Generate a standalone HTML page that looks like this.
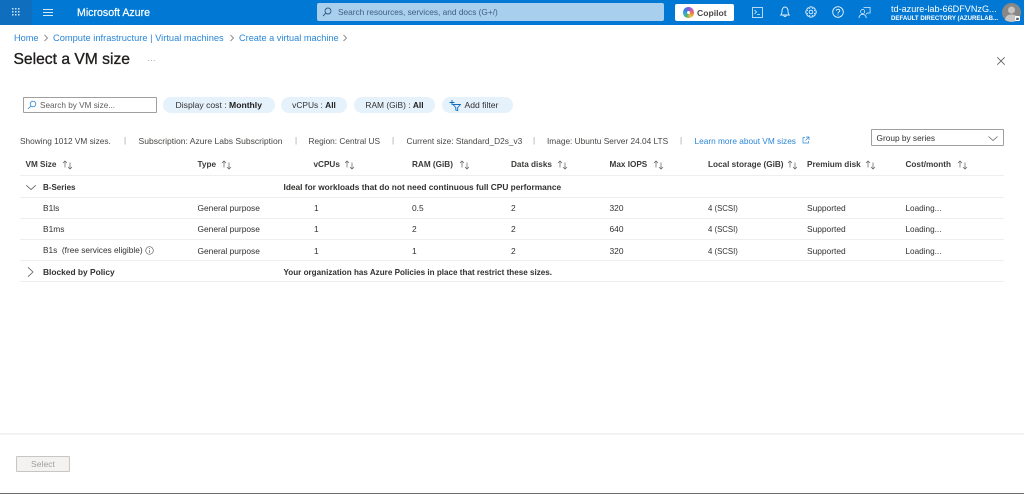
<!DOCTYPE html>
<html><head><meta charset="utf-8"><title>Select a VM size</title>
<style>
html,body{margin:0;padding:0;background:#fff;}
body{width:1024px;height:494px;position:relative;overflow:hidden;font-family:"Liberation Sans",sans-serif;font-size:8.4px;color:#323130;}
#w{position:absolute;left:0;top:0;width:1024px;height:494px;overflow:hidden;filter:blur(.3px);}
.t{position:absolute;white-space:nowrap;line-height:12px;height:12px;}
.h{font-weight:700;color:#3b3a39;font-size:8.2px;top:159px;}
.b{font-weight:700;color:#323130;font-size:8.4px;}
.l{position:absolute;left:20px;width:984px;height:1px;background:#efeeed;}
.p{position:absolute;top:97px;height:16px;border-radius:8px;background:#e5f1fb;line-height:16px;text-align:center;white-space:nowrap;font-size:8.4px;color:#323130;}
.p b{color:#201f1e;}
.sep{position:absolute;top:135px;color:#a19f9d;line-height:12px;font-size:8px;}
.m{color:#484644;top:135px;font-size:8.3px;}
.sc{font-size:7.8px;}
a{color:#2a86d6;text-decoration:none;}
svg{position:absolute;}
.a{top:159.500px;}
</style></head><body><div id="w">
<div style="position:absolute;left:0;top:0;width:1024px;height:25px;background:#0078d4;"></div>
<div style="position:absolute;left:0;top:0;width:32px;height:25px;background:#106ebe;"></div>
<svg style="left:11px;top:7px" width="10" height="10" viewBox="0 0 10 10" fill="#cfe4f7"><rect x="1" y="1" width="1.5" height="1.5"/><rect x="4" y="1" width="1.5" height="1.5"/><rect x="7" y="1" width="1.5" height="1.5"/><rect x="1" y="4" width="1.5" height="1.5"/><rect x="4" y="4" width="1.5" height="1.5"/><rect x="7" y="4" width="1.5" height="1.5"/><rect x="1" y="7" width="1.5" height="1.5"/><rect x="4" y="7" width="1.5" height="1.5"/><rect x="7" y="7" width="1.5" height="1.5"/></svg>
<svg style="left:43px;top:8px" width="10" height="9" viewBox="0 0 10 9" stroke="#d5e8f8" stroke-width="1"><path d="M0 1.500H10M0 4.500H10M0 7.500H10"/></svg>
<div class="t" style="left:77px;top:7px;color:#fff;font-size:10.6px;-webkit-text-stroke:.2px #fff;">Microsoft Azure</div>
<div style="position:absolute;left:317px;top:3px;width:347px;height:18px;background:#a9cfee;border-radius:2px;"></div>
<svg style="left:322px;top:7px" width="10" height="10" viewBox="0 0 10 10" fill="none" stroke="#31587d" stroke-width=".9"><circle cx="6" cy="4" r="3"/><path d="M3.800 6.200L1 9"/></svg>
<div class="t" style="left:338px;top:6px;color:#3f5f7c;font-size:8.3px;">Search resources, services, and docs (G+/)</div>
<div style="position:absolute;left:675px;top:4px;width:59px;height:17px;background:#fff;border-radius:2px;"></div>
<div style="position:absolute;left:683px;top:7px;width:10.500px;height:10.500px;border-radius:50%;background:conic-gradient(#7c5ce0,#d05fb0,#ef7f3c,#f0c04a,#58b368,#2fa9d8,#3b7fdc,#7c5ce0);"></div>
<div style="position:absolute;left:686.700px;top:10.700px;width:3px;height:3px;border-radius:50%;background:#fff;"></div>
<div class="t" style="left:697px;top:7px;font-size:8.600px;color:#4a4947;font-weight:700;">Copilot</div>
<svg style="left:752px;top:6.500px" width="11" height="11" viewBox="0 0 11 11" fill="none" stroke="#e5f1fb" stroke-width=".8"><rect x=".5" y=".5" width="10" height="10"/><path d="M2.500 3L4.500 5L2.500 7M5 7.500H8"/></svg>
<svg style="left:779px;top:6px" width="12" height="12" viewBox="0 0 12 12" fill="none" stroke="#e5f1fb" stroke-width=".9"><path d="M1.800 9C2.800 8 3 7.200 3 5C3 2.800 4.200 1 6 1C7.800 1 9 2.800 9 5C9 7.200 9.200 8 10.200 9ZM4.800 9.500C5 11 7 11 7.200 9.500"/></svg>
<svg style="left:805px;top:6px" width="12" height="12" viewBox="0 0 12 12" fill="none" stroke="#e5f1fb" stroke-width=".9"><circle cx="6" cy="6" r="1.800"/><path d="M5 .8H7L7.400 2.400L8.800 1.700L10.300 3.200L9.600 4.600L11.200 5V7L9.600 7.400L10.300 8.800L8.800 10.300L7.400 9.600L7 11.200H5L4.600 9.600L3.200 10.300L1.700 8.800L2.400 7.400L.8 7V5L2.400 4.600L1.700 3.200L3.200 1.700L4.600 2.400Z"/></svg>
<svg style="left:832px;top:6px" width="12" height="12" viewBox="0 0 12 12" fill="none" stroke="#e5f1fb" stroke-width=".9"><circle cx="6" cy="6" r="5.300"/><path d="M4.300 4.700C4.300 2.800 7.800 2.800 7.800 4.700C7.800 6 6 5.800 6 7.500"/><path d="M6 8.500V9.500"/></svg>
<svg style="left:858px;top:5.500px" width="13" height="13" viewBox="0 0 14 14" fill="none" stroke="#e5f1fb" stroke-width=".8"><circle cx="5" cy="6" r="2.200"/><path d="M1 13C1.300 10 3 9 5 9C7 9 8.500 10 9 13"/><path d="M6 1.500H13V7.500H10L8.500 9"/></svg>
<div class="t" style="left:891px;top:3px;color:#fff;font-size:9.100px;">td-azure-lab-66DFVNzG...</div>
<div class="t" style="left:891px;top:13px;color:#fff;font-size:6.100px;font-weight:700;">DEFAULT DIRECTORY (AZURELAB...</div>
<svg style="left:1002px;top:3px" width="19" height="19" viewBox="0 0 19 19"><circle cx="9.500" cy="9.500" r="9.500" fill="#8a8886"/><circle cx="9.500" cy="7" r="3.500" fill="#c8c6c4"/><path d="M3 17C3.500 12.500 6.500 11.500 9.500 11.500C12.500 11.500 15.500 12.500 16 17C12 19.500 7 19.500 3 17Z" fill="#c8c6c4"/><rect x="13" y="13" width="5" height="5" rx="1" fill="#fff"/><rect x="14.200" y="14.800" width="2.600" height="2.200" fill="#605e5c"/></svg>

<div class="t" style="left:14px;top:32px;font-size:9.200px;"><a>Home</a></div>
<svg style="left:43px;top:34px" width="6" height="8" viewBox="0 0 6 8" fill="none" stroke="#605e5c" stroke-width=".7"><path d="M1.500 1L4.500 4L1.500 7"/></svg>
<div class="t" style="left:53px;top:32px;font-size:9.300px;"><a>Compute infrastructure | Virtual machines</a></div>
<svg style="left:229px;top:34px" width="6" height="8" viewBox="0 0 6 8" fill="none" stroke="#605e5c" stroke-width=".7"><path d="M1.500 1L4.500 4L1.500 7"/></svg>
<div class="t" style="left:239px;top:32px;font-size:9.200px;"><a>Create a virtual machine</a></div>
<svg style="left:342px;top:34px" width="6" height="8" viewBox="0 0 6 8" fill="none" stroke="#605e5c" stroke-width=".7"><path d="M1.500 1L4.500 4L1.500 7"/></svg>
<div class="t" style="left:13.500px;top:50px;height:20px;line-height:20px;font-size:15.650px;color:#201f1e;-webkit-text-stroke:.35px #201f1e;">Select a VM size</div>
<div class="t" style="left:147.500px;top:55px;color:#8a8886;font-size:8px;">···</div>
<svg style="left:997px;top:56.500px" width="8" height="8" viewBox="0 0 8 8" stroke="#605e5c" stroke-width=".8"><path d="M.3 .3L7.700 7.700M7.700 .3L.3 7.700"/></svg>

<div style="position:absolute;left:23px;top:97px;width:132px;height:14px;border:1px solid #a19f9d;border-radius:1px;"></div>
<svg style="left:27px;top:100px" width="10" height="10" viewBox="0 0 10 10" fill="none" stroke="#2a86d6" stroke-width=".8"><circle cx="6" cy="4" r="2.800"/><path d="M4 6L1 9"/></svg>
<div class="t" style="left:40px;top:100px;color:#605e5c;font-size:8.200px;">Search by VM size...</div>
<div class="p" style="left:163px;width:111.500px;font-size:8.600px;">Display cost : <b>Monthly</b></div>
<div class="p" style="left:281px;width:66px;">vCPUs : <b>All</b></div>
<div class="p" style="left:354px;width:81px;">RAM (GiB) : <b>All</b></div>
<div class="p" style="left:442px;width:71px;"></div>
<div class="t" style="left:464.500px;top:99px;font-size:8.600px;color:#323130;">Add filter</div>
<svg style="left:449px;top:99.500px" width="12" height="12" viewBox="0 0 12 12" fill="none" stroke="#0f6cbd" stroke-width=".9"><path d="M3 0V5M.5 2.500H5.500"/><path d="M4 4.500H11.500L8.700 7.500V10.500L6.800 10V7.500Z"/></svg>

<div class="t m" style="left:20px;">Showing 1012 VM sizes.</div>
<div class="sep" style="left:124px;">|</div>
<div class="t m" style="left:138.500px;font-size:8.550px;">Subscription: Azure Labs Subscription</div>
<div class="sep" style="left:295px;">|</div>
<div class="t m" style="left:308.500px;">Region: Central US</div>
<div class="sep" style="left:392px;">|</div>
<div class="t m" style="left:406.500px;">Current size: Standard_D2s_v3</div>
<div class="sep" style="left:533px;">|</div>
<div class="t m" style="left:547px;">Image: Ubuntu Server 24.04 LTS</div>
<div class="sep" style="left:680px;">|</div>
<div class="t m" style="left:694.500px;"><a>Learn more about VM sizes</a></div>
<svg style="left:802px;top:136px" width="8" height="8" viewBox="0 0 8 8" fill="none" stroke="#2a86d6" stroke-width=".7"><path d="M3 1.500H1V7H6.500V5M4 1H7V4M7 1L3.500 4.500"/></svg>
<div style="position:absolute;left:871px;top:129px;width:131px;height:15px;border:1px solid #a19f9d;border-radius:1px;"></div>
<div class="t" style="left:876.500px;top:132px;color:#323130;font-size:8.300px;">Group by series</div>
<svg style="left:988px;top:136px" width="10" height="5" viewBox="0 0 10 5" fill="none" stroke="#605e5c" stroke-width=".7"><path d="M.5 .5L5 4.500L9.500 .5"/></svg>

<div class="t h" style="left:25.500px;">VM Size</div>
<svg class="a" style="left:62px" width="11" height="10" viewBox="0 0 11 10" fill="none" stroke="#605e5c" stroke-width=".7"><path d="M3 7.500V1M1 3L3 1L5 3M8 2.500V9M6 7L8 9L10 7"/></svg>
<div class="t h" style="left:197.500px;">Type</div>
<svg class="a" style="left:221px" width="11" height="10" viewBox="0 0 11 10" fill="none" stroke="#605e5c" stroke-width=".7"><path d="M3 7.500V1M1 3L3 1L5 3M8 2.500V9M6 7L8 9L10 7"/></svg>
<div class="t h" style="left:313.500px;">vCPUs</div>
<svg class="a" style="left:344px" width="11" height="10" viewBox="0 0 11 10" fill="none" stroke="#605e5c" stroke-width=".7"><path d="M3 7.500V1M1 3L3 1L5 3M8 2.500V9M6 7L8 9L10 7"/></svg>
<div class="t h" style="left:412px;">RAM (GiB)</div>
<svg class="a" style="left:458.500px" width="11" height="10" viewBox="0 0 11 10" fill="none" stroke="#605e5c" stroke-width=".7"><path d="M3 7.500V1M1 3L3 1L5 3M8 2.500V9M6 7L8 9L10 7"/></svg>
<div class="t h" style="left:511px;">Data disks</div>
<svg class="a" style="left:556.500px" width="11" height="10" viewBox="0 0 11 10" fill="none" stroke="#605e5c" stroke-width=".7"><path d="M3 7.500V1M1 3L3 1L5 3M8 2.500V9M6 7L8 9L10 7"/></svg>
<div class="t h" style="left:609.500px;">Max IOPS</div>
<svg class="a" style="left:652.500px" width="11" height="10" viewBox="0 0 11 10" fill="none" stroke="#605e5c" stroke-width=".7"><path d="M3 7.500V1M1 3L3 1L5 3M8 2.500V9M6 7L8 9L10 7"/></svg>
<div class="t h" style="left:708px;">Local storage (GiB)</div>
<svg class="a" style="left:787px" width="11" height="10" viewBox="0 0 11 10" fill="none" stroke="#605e5c" stroke-width=".7"><path d="M3 7.500V1M1 3L3 1L5 3M8 2.500V9M6 7L8 9L10 7"/></svg>
<div class="t h" style="left:807px;">Premium disk</div>
<svg class="a" style="left:865px" width="11" height="10" viewBox="0 0 11 10" fill="none" stroke="#605e5c" stroke-width=".7"><path d="M3 7.500V1M1 3L3 1L5 3M8 2.500V9M6 7L8 9L10 7"/></svg>
<div class="t h" style="left:905.500px;">Cost/month</div>
<svg class="a" style="left:957px" width="11" height="10" viewBox="0 0 11 10" fill="none" stroke="#605e5c" stroke-width=".7"><path d="M3 7.500V1M1 3L3 1L5 3M8 2.500V9M6 7L8 9L10 7"/></svg>
<div class="l" style="top:175px"></div>

<svg style="left:26px;top:185px" width="10" height="5" viewBox="0 0 10 5" fill="none" stroke="#605e5c" stroke-width=".8"><path d="M.3 .3L5 4.600L9.700 .3"/></svg>
<div class="t b" style="left:43px;top:182px;font-size:8px;">B-Series</div>
<div class="t b" style="left:283.500px;top:181px;font-size:8.340px;">Ideal for workloads that do not need continuous full CPU performance</div>
<div class="l" style="top:197px"></div>

<div class="t" style="left:43px;top:202px;">B1ls</div><div class="t" style="left:197.500px;top:202px;">General purpose</div><div class="t" style="left:314px;top:202px;">1</div><div class="t" style="left:412px;top:202px;">0.5</div><div class="t" style="left:511px;top:202px;">2</div><div class="t" style="left:609.500px;top:202px;">320</div><div class="t sc" style="left:708px;top:203px;">4 (SCSI)</div><div class="t" style="left:807px;top:202px;">Supported</div><div class="t" style="left:905.500px;top:203px;font-size:8.200px;">Loading...</div>
<div class="l" style="top:218px"></div>
<div class="t" style="left:43px;top:223px;">B1ms</div><div class="t" style="left:197.500px;top:223px;">General purpose</div><div class="t" style="left:314px;top:223px;">1</div><div class="t" style="left:412px;top:223px;">2</div><div class="t" style="left:511px;top:223px;">2</div><div class="t" style="left:609.500px;top:223px;">640</div><div class="t sc" style="left:708px;top:224px;">4 (SCSI)</div><div class="t" style="left:807px;top:223px;">Supported</div><div class="t" style="left:905.500px;top:224px;font-size:8.200px;">Loading...</div>
<div class="l" style="top:239px"></div>
<div class="t" style="left:43px;top:244px;font-size:8.300px;">B1s&nbsp; (free services eligible)</div>
<svg style="left:144.500px;top:246px" width="9" height="9" viewBox="0 0 9 9" fill="none" stroke="#605e5c" stroke-width=".7"><circle cx="4.500" cy="4.500" r="3.800"/><path d="M4.500 4V7M4.500 2V3"/></svg>
<div class="t" style="left:197.500px;top:245px;">General purpose</div><div class="t" style="left:314px;top:245px;">1</div><div class="t" style="left:412px;top:245px;">1</div><div class="t" style="left:511px;top:245px;">2</div><div class="t" style="left:609.500px;top:245px;">320</div><div class="t sc" style="left:708px;top:246px;">4 (SCSI)</div><div class="t" style="left:807px;top:245px;">Supported</div><div class="t" style="left:905.500px;top:246px;font-size:8.200px;">Loading...</div>
<div class="l" style="top:260px"></div>
<svg style="left:27px;top:267px" width="7" height="10" viewBox="0 0 7 10" fill="none" stroke="#605e5c" stroke-width=".8"><path d="M1 .3L6 5L1 9.700"/></svg>
<div class="t b" style="left:43px;top:266px;">Blocked by Policy</div>
<div class="t b" style="left:283.500px;top:267px;font-size:8.100px;">Your organization has Azure Policies in place that restrict these sizes.</div>
<div class="l" style="top:281px"></div>

<div style="position:absolute;left:0;top:433px;width:1024px;height:2px;background:#f3f2f1;"></div>
<div style="position:absolute;left:16px;top:456px;width:52px;height:14px;background:#f3f2f1;border:1px solid #c8c6c4;border-radius:1px;text-align:center;line-height:14px;color:#a19f9d;font-size:8.600px;">Select</div>
<div style="position:absolute;left:0;top:493px;width:1024px;height:1px;background:#6e6e6e;"></div>
</div></body></html>
